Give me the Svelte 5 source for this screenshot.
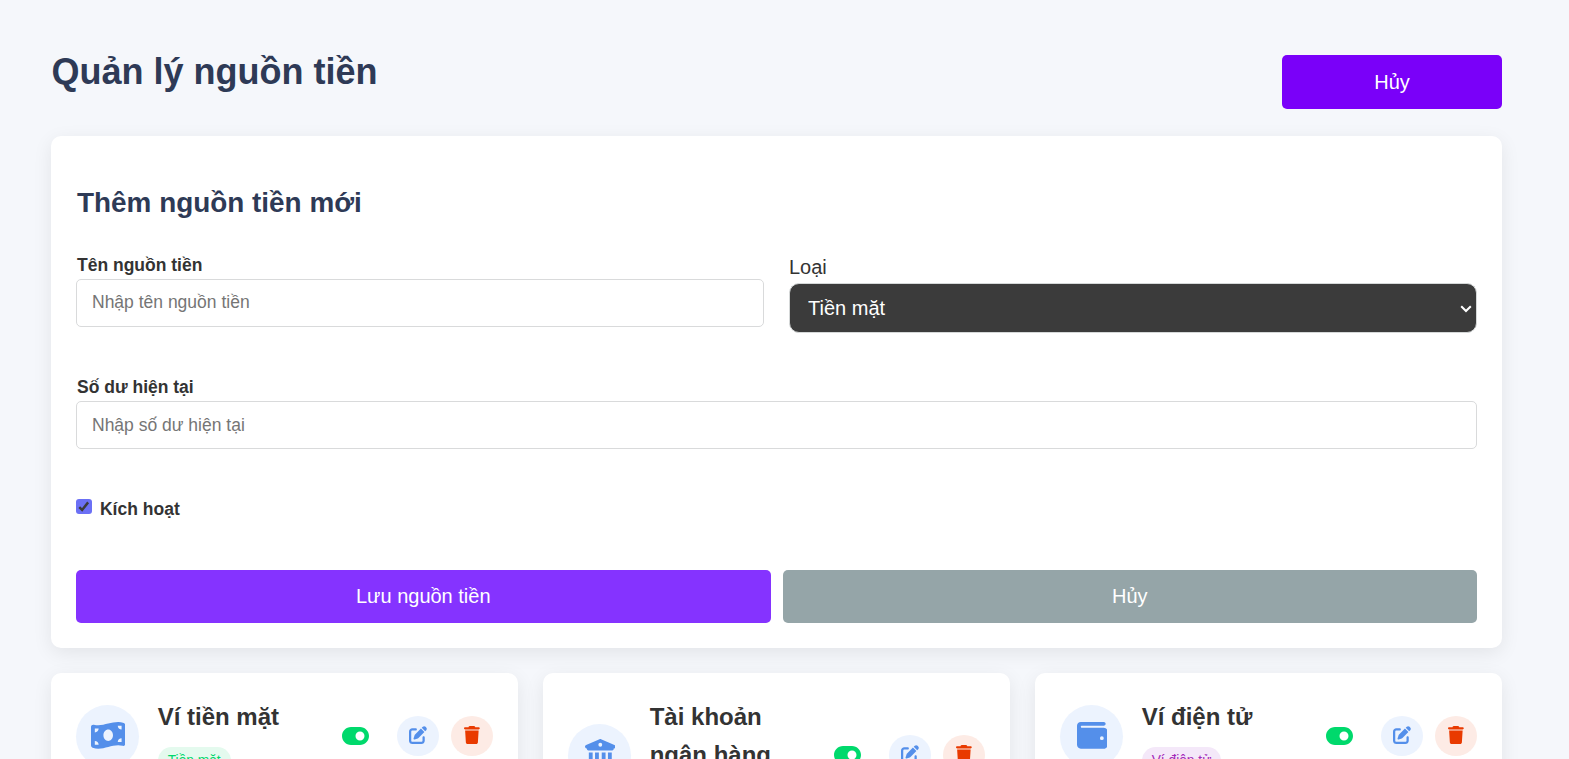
<script>
  const cards = [
    { title: 'Ví tiền mặt', type: 'Tiền mặt', tone: 'green', icon: 'money' },
    { title: 'Tài khoản ngân hàng', type: 'Ngân hàng', tone: 'blue', icon: 'bank' },
    { title: 'Ví điện tử', type: 'Ví điện tử', tone: 'purple', icon: 'wallet' }
  ];

  const icons = {
    money: { w: 576, d: 'M0 112.5V422.3c0 18 10.1 35 27 41.3c87 32.5 174 10.3 261-11.9c79.8-20.3 159.6-40.7 239.3-18.9c23 6.3 48.7-9.5 48.7-33.4V89.7c0-18-10.1-35-27-41.3C462 15.9 375 38.1 288 60.3C208.2 80.6 128.4 100.9 48.7 79.1C25.6 72.8 0 88.6 0 112.5zM288 352c-44.2 0-80-43-80-96s35.8-96 80-96s80 43 80 96s-35.8 96-80 96zM64 352c35.3 0 64 28.7 64 64H64V352zm64-208c0 35.3-28.7 64-64 64V144h64zM512 304v64H448c0-35.3 28.7-64 64-64zM448 96h64v64c-35.3 0-64-28.7-64-64z' },
    bank: { w: 512, d: 'M243.4 2.6l-224 96c-14 6-21.8 21-18.7 35.8S16.8 160 32 160v8c0 13.3 10.7 24 24 24H456c13.3 0 24-10.7 24-24v-8c15.2 0 28.3-10.7 31.3-25.6s-4.8-29.9-18.7-35.8l-224-96c-8-3.4-17.2-3.4-25.2 0zM128 224H64V420.3c-.6 .3-1.2 .7-1.8 1.1l-48 32c-11.7 7.8-17 22.4-12.9 35.9S17.9 512 32 512H480c14.1 0 26.5-9.2 30.6-22.7s-1.1-28.1-12.9-35.9l-48-32c-.6-.4-1.2-.7-1.8-1.1V224H384V416H344V224H280V416H232V224H168V416H128V224zM256 64a32 32 0 1 1 0 64 32 32 0 1 1 0-64z' },
    wallet: { w: 512, d: 'M64 32C28.7 32 0 60.7 0 96V416c0 35.3 28.7 64 64 64H448c35.3 0 64-28.7 64-64V192c0-35.3-28.7-64-64-64H80c-8.8 0-16-7.2-16-16s7.2-16 16-16H448c17.7 0 32-14.3 32-32s-14.3-32-32-32H64zM416 272a32 32 0 1 1 0 64 32 32 0 1 1 0-64z' },
    toggle: { w: 576, d: 'M192 64C86 64 0 150 0 256S86 448 192 448H384c106 0 192-86 192-192s-86-192-192-192H192zm192 96a96 96 0 1 1 0 192 96 96 0 1 1 0-192z' },
    edit: { w: 512, d: 'M471.6 21.7c-21.9-21.9-57.3-21.9-79.2 0L362.3 51.7l97.9 97.9 30.1-30.1c21.9-21.9 21.9-57.3 0-79.2L471.6 21.7zm-299.2 220c-6.1 6.1-10.8 13.6-13.5 21.9l-29.6 88.8c-2.9 8.6-.6 18.1 5.8 24.6s15.9 8.7 24.6 5.8l88.8-29.6c8.2-2.7 15.7-7.4 21.9-13.5L437.7 172.3 339.7 74.3 172.4 241.7zM96 64C43 64 0 107 0 160V416c0 53 43 96 96 96H352c53 0 96-43 96-96V320c0-17.7-14.3-32-32-32s-32 14.3-32 32v96c0 17.7-14.3 32-32 32H96c-17.7 0-32-14.3-32-32V160c0-17.7 14.3-32 32-32h96c17.7 0 32-14.3 32-32s-14.3-32-32-32H96z' },
    trash: { w: 448, d: 'M135.2 17.7L128 32H32C14.3 32 0 46.3 0 64S14.3 96 32 96H416c17.7 0 32-14.3 32-32s-14.3-32-32-32H320l-7.2-14.3C307.4 6.8 296.3 0 284.2 0H163.8c-12.1 0-23.2 6.8-28.6 17.7zM416 128H32L53.2 467c1.6 25.3 22.6 45 47.9 45H346.9c25.3 0 46.3-19.7 47.9-45L416 128z' }
  };
</script>

{#snippet icon(name)}
  <svg class="icon {name}" viewBox="0 0 {icons[name].w} 512" aria-hidden="true">
    <path d={icons[name].d} />
  </svg>
{/snippet}

<main class="page">
  <header class="top">
    <h1>Quản lý nguồn tiền</h1>
    <button class="btn cancel-top">Hủy</button>
  </header>

  <section class="panel form">
    <h2>Thêm nguồn tiền mới</h2>
    <div class="row">
      <label class="field">
        <span class="label">Tên nguồn tiền</span>
        <input type="text" placeholder="Nhập tên nguồn tiền" />
      </label>
      <div class="field type">
        <span class="label plain">Loại</span>
        <div class="select-wrap">
          <select>
            <option>Tiền mặt</option>
          </select>
          <svg class="chevron" viewBox="0 0 12 8" aria-hidden="true"><path d="M1.2 1.2 6 6l4.800-4.800" /></svg>
        </div>
      </div>
    </div>
    <label class="field balance">
      <span class="label">Số dư hiện tại</span>
      <input type="text" placeholder="Nhập số dư hiện tại" />
    </label>
    <div class="active">
      <span class="check">
        <svg viewBox="0 0 15 15" aria-hidden="true"><path d="M3.200 8 6 10.700 11.900 3.300" /></svg>
      </span>
      <span class="label">Kích hoạt</span>
    </div>
    <div class="actions">
      <button class="btn save">Lưu nguồn tiền</button>
      <button class="btn cancel">Hủy</button>
    </div>
  </section>

  <section class="cards">
    {#each cards as card}
      <article class="panel card">
        <div class="avatar">{@render icon(card.icon)}</div>
        <div class="info">
          <h3>{card.title}</h3>
          <span class="badge {card.tone}">{card.type}</span>
        </div>
        <div class="tools">
          <span class="switch">{@render icon('toggle')}</span>
          <button class="round blue-bg" aria-label="Sửa">{@render icon('edit')}</button>
          <button class="round red-bg" aria-label="Xóa">{@render icon('trash')}</button>
        </div>
      </article>
    {/each}
  </section>
</main>

<style>
  :global(body) {
    background: #f5f7fb;
    overflow: hidden;
  }
  .page {
    box-sizing: border-box;
    height: 759px;
    overflow: hidden;
    padding: 52px 67px 0 51px;
    font-family: 'Liberation Sans', Arial, sans-serif;
    color: #333;
  }
  button, input, select {
    font-family: inherit;
    box-sizing: border-box;
    margin: 0;
  }
  h1, h2, h3 { margin: 0; font-weight: 700; }
  .top {
    display: flex;
    justify-content: space-between;
    align-items: flex-start;
    height: 84px;
  }
  h1 {
    font-size: 36px;
    line-height: 40px;
    padding-left: 0.5px;
    color: #2e3a56;
  }
  .btn {
    border: 0;
    border-radius: 5px;
    height: 53px;
    padding: 0;
    font-size: 20px;
    color: #fff;
  }
  .cancel-top {
    width: 220px;
    height: 53.5px;
    padding-top: 1px;
    margin-top: 3.3px;
    background: #7a00f9;
  }
  .panel {
    background: #fff;
    border-radius: 10px;
    box-shadow: 0 5px 19px rgba(0, 0, 0, 0.08);
    box-sizing: border-box;
  }
  .form { height: 512px; padding: 51px 25px 25px; }
  h2 {
    font-size: 27.9px;
    line-height: 32px;
    color: #2e3a56;
    padding-left: 1px;
    margin-bottom: 36px;
  }
  .row {
    display: grid;
    grid-template-columns: 1fr 1fr;
    gap: 25px;
    height: 79px;
    margin-bottom: 43px;
  }
  .field { display: flex; flex-direction: column; gap: 4px; }
  .label {
    font-size: 17.5px;
    line-height: 20px;
    font-weight: 700;
    padding-left: 1px;
  }
  .label.plain { font-size: 20px; line-height: 23px; font-weight: 400; padding: 0; }
  .type { padding-top: 1px; gap: 4.4px; }
  input {
    height: 48px;
    padding: 0 15px 2px;
    border: 1px solid #d9dadb;
    border-radius: 5px;
    font-size: 17.5px;
    background: #fff;
  }
  .balance input { padding-bottom: 0; }
  input::placeholder { color: #757575; opacity: 1; }
  .select-wrap { position: relative; display: flex; }
  select {
    appearance: none;
    width: 100%;
    height: 50px;
    padding: 0 18px;
    border: 1px solid #d5d8d8;
    border-radius: 10px;
    background: #3b3b3b;
    color: #fff;
    font-size: 20px;
  }
  .chevron {
    position: absolute;
    right: 5px;
    top: 22px;
    width: 12px;
    height: 8px;
    fill: none;
    stroke: #fff;
    stroke-width: 2;
  }
  .active {
    display: flex;
    gap: 7.3px;
    margin-top: 50px;
    height: 20px;
    padding-left: 0.4px;
  }
  .check {
    width: 15.3px;
    height: 15.3px;
    border-radius: 3px;
    background: #6b70f5;
    display: flex;
  }
  .check svg { width: 100%; fill: none; stroke: #3b3b3b; stroke-width: 2.4; }
  .actions {
    display: grid;
    grid-template-columns: 1fr 1fr;
    gap: 12px;
    margin-top: 51px;
  }
  .save { background: #8533ff; }
  .cancel { background: #95a5a8; }
  .cards {
    display: grid;
    grid-template-columns: repeat(3, 1fr);
    gap: 25px;
    margin-top: 25px;
  }
  .card {
    display: flex;
    align-items: center;
    align-self: start;
    padding: 25px 25px 130px;
  }
  .icon { display: block; flex: none; fill: currentColor; }
  .avatar {
    display: flex;
    align-items: center;
    justify-content: center;
    flex: none;
    box-sizing: border-box;
    width: 63px;
    height: 63px;
    padding: 0 0 1px 1px;
    border-radius: 50%;
    background: #ecf3fe;
    color: #548fea;
    margin-right: 18.7px;
  }
  .money, .bank, .wallet { height: 30.600px; }
  .info { flex: 1; min-width: 0; }
  h3 {
    font-size: 24px;
    line-height: 38px;
    margin-bottom: 11px;
  }
  .badge {
    display: block;
    width: fit-content;
    height: 27px;
    line-height: 27px;
    padding: 0 10px;
    border-radius: 14px;
    font-size: 13.750px;
  }
  .green { background: #e4faee; color: #00d66b; }
  .blue { background: #ecf3fe; color: #548fea; }
  .purple { background: #f4e8f9; color: #a42bb8; }
  .tools { display: flex; align-items: center; gap: 12px; }
  .switch { color: #00d96c; margin: 0 16px 0 40px; }
  .toggle { height: 24px; }
  .round {
    display: flex;
    align-items: center;
    justify-content: center;
    width: 42px;
    height: 40px;
    padding: 0 0 2px;
    border: 0;
    border-radius: 50%;
  }
  .blue-bg { background: #ecf3fe; color: #548fea; }
  .red-bg { background: #fdebe5; color: #e93a00; }
  .edit, .trash { height: 18px; }
</style>
